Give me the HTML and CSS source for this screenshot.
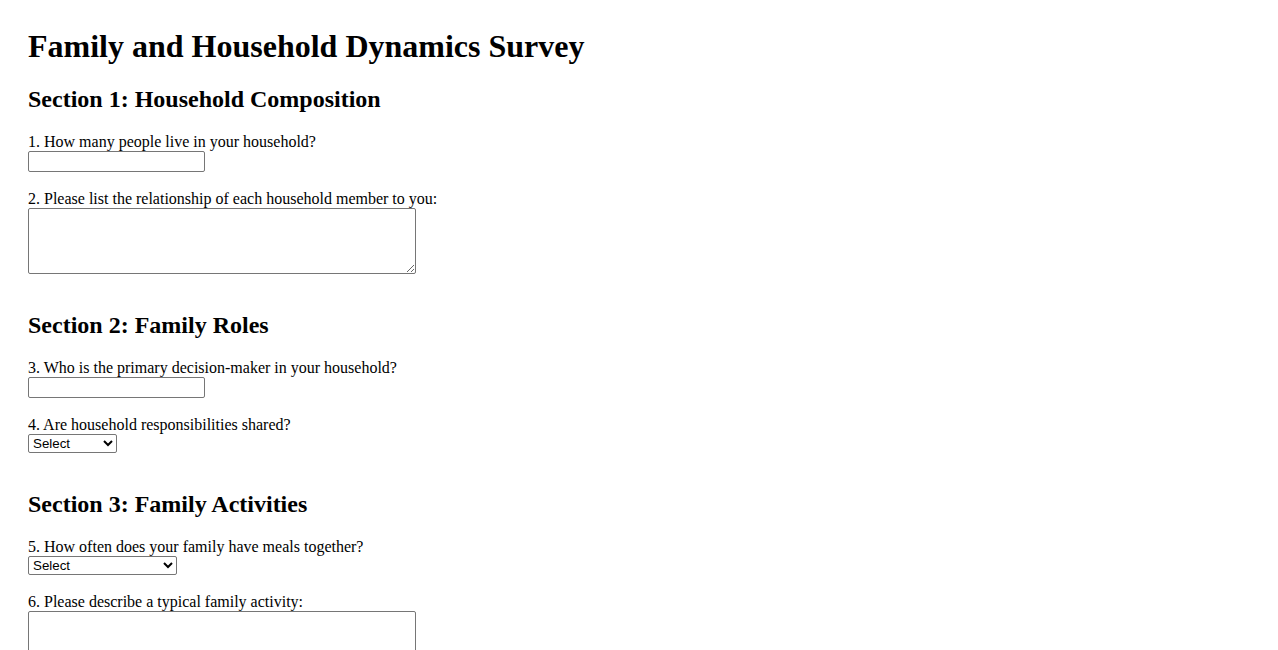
FILE: index.html
```html
<!DOCTYPE html>
<html lang="en">
<head>
<meta charset="utf-8">
<title>Family and Household Dynamics Survey</title>
<link rel="stylesheet" href="styles.css">
</head>
<body>
<main class="survey">
  <h1 class="title">Family and Household Dynamics Survey</h1>
  <form class="survey-form">
    <section class="section">
      <h2 class="section-title">Section 1: Household Composition</h2>
      <div class="question">
        <label class="q-label" for="q1">1. How many people live in your household?</label>
        <input class="text-input" type="text" id="q1">
      </div>
      <div class="question">
        <label class="q-label" for="q2">2. Please list the relationship of each household member to you:</label>
        <textarea class="text-area" id="q2"></textarea>
      </div>
    </section>
    <section class="section">
      <h2 class="section-title">Section 2: Family Roles</h2>
      <div class="question">
        <label class="q-label" for="q3">3. Who is the primary decision-maker in your household?</label>
        <input class="text-input" type="text" id="q3">
      </div>
      <div class="question">
        <label class="q-label" for="q4">4. Are household responsibilities shared?</label>
        <select class="select select-short" id="q4">
          <option>Select</option>
          <option>Yes</option>
          <option>No</option>
          <option>Sometimes</option>
        </select>
      </div>
    </section>
    <section class="section">
      <h2 class="section-title">Section 3: Family Activities</h2>
      <div class="question">
        <label class="q-label" for="q5">5. How often does your family have meals together?</label>
        <select class="select select-long" id="q5">
          <option>Select</option>
          <option>Daily</option>
          <option>A few times a week</option>
          <option>Weekly</option>
          <option>Rarely</option>
        </select>
      </div>
      <div class="question">
        <label class="q-label" for="q6">6. Please describe a typical family activity:</label>
        <textarea class="text-area" id="q6"></textarea>
      </div>
    </section>
  </form>
</main>
</body>
</html>
```
FILE: styles.css
```css
html, body {
  background: #ffffff;
}
body {
  margin: 0;
  padding: 28px;
  font-family: "Liberation Serif", "Times New Roman", serif;
  font-size: 16px;
  color: #000000;
}
.title {
  font-size: 32px;
  font-weight: bold;
  margin: 0 0 20px;
  line-height: 37px;
}
.survey-form {
  margin: 0;
}
.section + .section {
  padding-top: 19px;
}
.section-title {
  font-size: 24px;
  font-weight: bold;
  line-height: 28px;
  margin: 0 0 20px;
}
.question {
  margin-bottom: 18px;
}
.q-label {
  display: block;
  line-height: 18px;
}
.text-input {
  display: block;
  box-sizing: border-box;
  width: 177px;
  height: 21px;
  margin: 0;
  padding: 1px 2px;
  border: 1px solid #767676;
  border-radius: 2px;
  font-family: "Liberation Sans", Arial, sans-serif;
  font-size: 13.33px;
}
.text-area {
  display: block;
  box-sizing: border-box;
  width: 388px;
  height: 66px;
  margin: 0;
  padding: 2px;
  border: 1px solid #767676;
  border-radius: 2px;
  font-family: "Liberation Mono", monospace;
  font-size: 13.33px;
}
.select {
  display: block;
  box-sizing: border-box;
  height: 19px;
  margin: 0;
  padding: 0;
  border: 1px solid #767676;
  border-radius: 2px;
  background: #ffffff;
  color: #000000;
  font-family: "Liberation Sans", Arial, sans-serif;
  font-size: 13.33px;
}
.select-short {
  width: 89px;
}
.select-long {
  width: 149px;
}
```
